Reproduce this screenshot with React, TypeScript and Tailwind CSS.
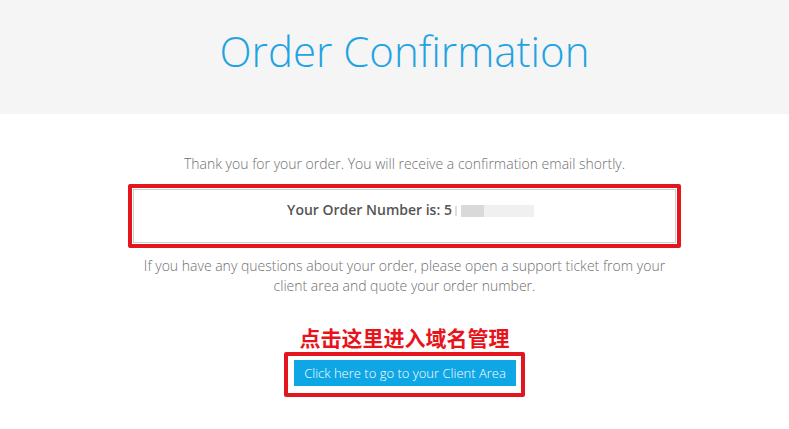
import React from 'react';

export default function App() {
  return (
    <div className="min-h-screen bg-white font-['Open_Sans',sans-serif]">
      <header className="h-[114px] bg-[#f5f5f5] flex items-center justify-center pl-[20px]">
        <h1 className="text-[42px] font-light text-[#1fa3e2] leading-none -mt-[12px]">
          Order Confirmation
        </h1>
      </header>

      <main className="flex flex-col items-center pl-[20px] pt-[40px]">
        <p className="text-[14px] leading-[20px] font-light text-[#6f6f6f]">
          Thank you for your order. You will receive a confirmation email shortly.
        </p>

        <div className="mt-[10px] w-[553px] border-4 border-[#e3161f] rounded-[2px] p-px">
          <div className="h-[54px] border border-[#cfcfcf] flex justify-center pt-[10px] pl-[12px]">
            <span className="text-[14px] leading-[20px] font-semibold text-[#555] flex items-start">
              Your Order Number is: 5
              <span className="ml-[3px] mt-[6px] w-[2px] h-[10px] bg-[#ddd]" />
              <span className="ml-[4px] mt-[5px] w-[23px] h-[12px] bg-[#d9d9d9]" />
              <span className="mt-[5px] w-[50px] h-[12px] bg-[#f0f0f0]" />
            </span>
          </div>
        </div>

        <p className="mt-[8px] w-[540px] text-center text-[14px] leading-[20px] font-light text-[#6f6f6f]">
          If you have any questions about your order, please open a support ticket from your client area and quote your order number.
        </p>

        <div className="mt-[29px] text-[21px] leading-[24px] font-bold text-[#e8141c] font-['Noto_Sans_CJK_SC',sans-serif]">
          点击这里进入域名管理
        </div>

        <div className="mt-[3px] border-4 border-[#e3161f] rounded-[2px] pl-[6px] pr-[5px] pt-[4px] pb-[7px]">
          <button className="h-[26px] px-[10px] bg-[#0fa6e6] text-white text-[13px] font-light leading-[26px]">
            Click here to go to your Client Area
          </button>
        </div>
      </main>
    </div>
  );
}
